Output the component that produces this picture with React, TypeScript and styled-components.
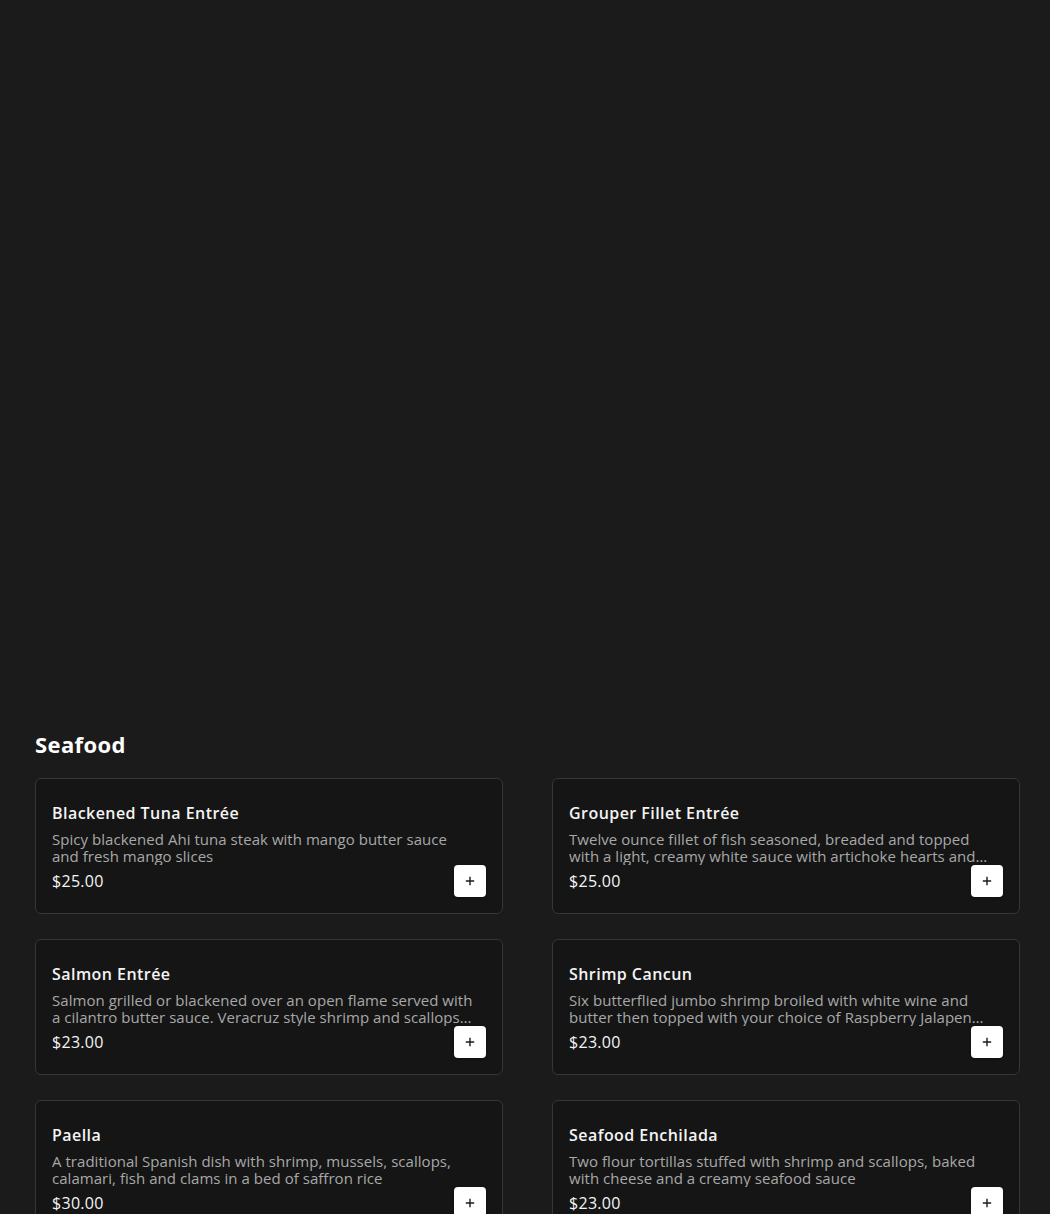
import * as React from "react";
import styled, { createGlobalStyle } from "styled-components";

interface Dish {
  name: string;
  description: string;
  price: string;
}

const dishes: Dish[] = [
  {
    name: "Blackened Tuna Entrée",
    description: "Spicy blackened Ahi tuna steak with mango butter sauce and fresh mango slices",
    price: "$25.00",
  },
  {
    name: "Grouper Fillet Entrée",
    description:
      "Twelve ounce fillet of fish seasoned, breaded and topped with a light, creamy white sauce with artichoke hearts and mushrooms",
    price: "$25.00",
  },
  {
    name: "Salmon Entrée",
    description:
      "Salmon grilled or blackened over an open flame served with a cilantro butter sauce. Veracruz style shrimp and scallops available upon request",
    price: "$23.00",
  },
  {
    name: "Shrimp Cancun",
    description:
      "Six butterflied jumbo shrimp broiled with white wine and butter then topped with your choice of Raspberry Jalapeno or Mango sauce",
    price: "$23.00",
  },
  {
    name: "Paella",
    description: "A traditional Spanish dish with shrimp, mussels, scallops, calamari, fish and clams in a bed of saffron rice",
    price: "$30.00",
  },
  {
    name: "Seafood Enchilada",
    description: "Two flour tortillas stuffed with shrimp and scallops, baked with cheese and a creamy seafood sauce",
    price: "$23.00",
  },
];

const PlusIcon = () => (
  <svg width="10" height="10" viewBox="0 0 10 10" fill="none">
    <path d="M5 0.8v8.4M0.8 5h8.4" stroke="#1c1c1c" strokeWidth="1.4" />
  </svg>
);

const App = () => {
  return (
    <>
      <GlobalStyle />
      <Page>
        <Hero />
        <Section>
          <SectionTitle>Seafood</SectionTitle>
          <Grid>
            {dishes.map((dish) => (
              <Card key={dish.name}>
                <DishName>{dish.name}</DishName>
                <Description>{dish.description}</Description>
                <Footer>
                  <Price>{dish.price}</Price>
                  <AddButton aria-label={`Add ${dish.name}`}>
                    <PlusIcon />
                  </AddButton>
                </Footer>
              </Card>
            ))}
          </Grid>
        </Section>
      </Page>
    </>
  );
};

const GlobalStyle = createGlobalStyle`
  html, body {
    margin: 0;
    background: #1b1b1b;
  }
  body {
    font-family: "Open Sans", "Noto Sans", "DejaVu Sans", sans-serif;
    color: #f4f4f4;
  }
  * {
    box-sizing: border-box;
  }
`;

const Page = styled.div`
  min-height: 100vh;
  background: #1b1b1b;
`;

const Hero = styled.div`
  height: 730px;
`;

const Section = styled.section`
  padding: 0 30px 40px 35px;
`;

const SectionTitle = styled.h2`
  margin: 0 0 20px;
  font-size: 22px;
  line-height: 28px;
  font-weight: 700;
  letter-spacing: 0.4px;
  color: #ffffff;
`;

const Grid = styled.div`
  display: grid;
  grid-template-columns: repeat(2, 1fr);
  column-gap: 49px;
  row-gap: 25px;
`;

const Card = styled.div`
  display: flex;
  flex-direction: column;
  padding: 24px 16px 16px 16px;
  background: #151515;
  border: 1px solid #363636;
  border-radius: 6px;
`;

const DishName = styled.h3`
  margin: 0 0 8px;
  font-size: 16px;
  line-height: 20px;
  font-weight: 600;
  letter-spacing: 0.45px;
  color: #f4f4f4;
`;

const Description = styled.p`
  margin: 0;
  padding-right: 11px;
  font-size: 15px;
  line-height: 17px;
  letter-spacing: 0.04px;
  color: #a8a8a8;
  display: -webkit-box;
  -webkit-line-clamp: 2;
  -webkit-box-orient: vertical;
  overflow: hidden;
`;

const Footer = styled.div`
  display: flex;
  align-items: center;
  justify-content: space-between;
  height: 32px;
`;

const Price = styled.span`
  font-size: 16px;
  line-height: 20px;
  letter-spacing: 0.3px;
  color: #f4f4f4;
`;

const AddButton = styled.button`
  display: flex;
  align-items: center;
  justify-content: center;
  width: 32px;
  height: 32px;
  padding: 0;
  border: none;
  border-radius: 4px;
  background: #ffffff;
  box-shadow: 0 1px 3px rgba(0, 0, 0, 0.4);
  cursor: pointer;
`;

export default App;
